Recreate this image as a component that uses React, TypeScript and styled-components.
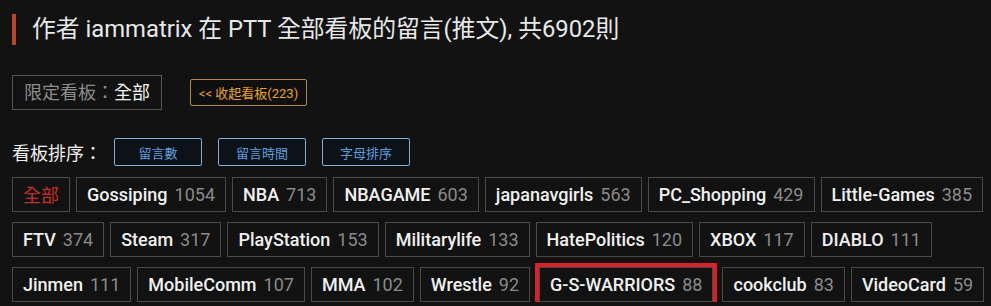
import styled, { createGlobalStyle } from "styled-components";

const GlobalStyle = createGlobalStyle`
  body {
    margin: 0;
    background: #121212;
    font-family: Roboto, "Noto Sans CJK TC", sans-serif;
  }
`;

type Board = { name: string; count: number; marked?: boolean };

const boards: Array<Board> = [
  { name: "Gossiping", count: 1054 },
  { name: "NBA", count: 713 },
  { name: "NBAGAME", count: 603 },
  { name: "japanavgirls", count: 563 },
  { name: "PC_Shopping", count: 429 },
  { name: "Little-Games", count: 385 },
  { name: "FTV", count: 374 },
  { name: "Steam", count: 317 },
  { name: "PlayStation", count: 153 },
  { name: "Militarylife", count: 133 },
  { name: "HatePolitics", count: 120 },
  { name: "XBOX", count: 117 },
  { name: "DIABLO", count: 111 },
  { name: "Jinmen", count: 111 },
  { name: "MobileComm", count: 107 },
  { name: "MMA", count: 102 },
  { name: "Wrestle", count: 92 },
  { name: "G-S-WARRIORS", count: 88, marked: true },
  { name: "cookclub", count: 83 },
  { name: "VideoCard", count: 59 },
];

const App = () => {
  return (
    <Page>
      <GlobalStyle />
      <Title>作者 iammatrix 在 PTT 全部看板的留言(推文), 共6902則</Title>
      <FilterRow>
        <Limit>
          限定看板：<span>全部</span>
        </Limit>
        <Collapse>&lt;&lt; 收起看板(223)</Collapse>
      </FilterRow>
      <SortRow>
        <SortLabel>看板排序：</SortLabel>
        <SortButton>留言數</SortButton>
        <SortButton>留言時間</SortButton>
        <SortButton>字母排序</SortButton>
      </SortRow>
      <Tags>
        <Tag className="all">全部</Tag>
        {boards.map((b) => (
          <Tag key={b.name} $marked={b.marked}>
            {b.name}
            <Count>{b.count}</Count>
          </Tag>
        ))}
      </Tags>
    </Page>
  );
};

const Page = styled.div`
  padding: 14px 0 0 12px;
  color: #eeeeee;
`;

const Title = styled.h1`
  margin: 0;
  border-left: 4px solid #b4462c;
  padding-left: 16px;
  height: 31px;
  line-height: 31px;
  font-size: 23.8px;
  font-weight: 400;
  color: #e8e8e8;
`;

const FilterRow = styled.div`
  display: flex;
  align-items: center;
  gap: 28px;
  margin-top: 30px;
`;

const Limit = styled.div`
  box-sizing: border-box;
  height: 35px;
  padding: 0 11px;
  border: 1px solid #555;
  line-height: 33px;
  font-size: 18px;
  color: #8c8c8c;
  span {
    color: #f2f2f2;
  }
`;

const Collapse = styled.button`
  box-sizing: border-box;
  width: 117px;
  height: 27px;
  padding: 0;
  border: 1px solid #b08a4c;
  border-radius: 2px;
  background: #0f0f0f;
  color: #e6a232;
  font-family: inherit;
  font-size: 13px;
`;

const SortRow = styled.div`
  display: flex;
  align-items: center;
  gap: 16px;
  margin-top: 28px;
`;

const SortLabel = styled.span`
  width: 86px;
  white-space: nowrap;
  font-size: 18px;
  color: #f0f0f0;
`;

const SortButton = styled.button`
  box-sizing: border-box;
  width: 88px;
  height: 28px;
  padding: 0;
  border: 1px solid #86acd2;
  border-radius: 2px;
  background: #0d1218;
  color: #5f9cda;
  font-family: inherit;
  font-size: 13px;
`;

const Tags = styled.div`
  display: flex;
  flex-wrap: wrap;
  gap: 10px 6px;
  margin-top: 11px;
  .all {
    color: #c4302b;
    font-family: "Noto Sans CJK TC", sans-serif;
    font-size: 18px;
    font-weight: 400;
    padding: 0 10px;
  }
`;

const Tag = styled.div<{ $marked?: boolean }>`
  box-sizing: border-box;
  height: 35px;
  padding: 0 10px;
  border: 1px solid #4a4a4a;
  line-height: 33px;
  font-size: 18px;
  font-weight: 500;
  color: #f0f0f0;
  white-space: nowrap;
  ${(p) =>
    p.$marked &&
    `
    margin: 0 3px;
    outline: 4px solid #d8212b;
    outline-offset: 0;
  `}
`;

const Count = styled.span`
  margin-left: 7px;
  font-weight: 400;
  color: #8a8a8a;
`;

export default App;
